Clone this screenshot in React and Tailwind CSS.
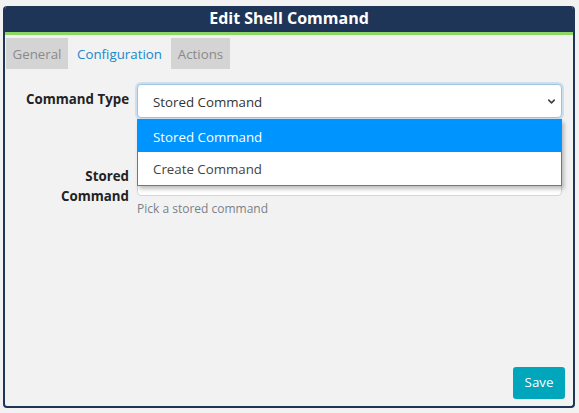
import React from 'react';
import { ChevronDown } from 'lucide-react';

const font = { fontFamily: '"Open Sans", "Liberation Sans", sans-serif' };

const Tab = ({ label, active, width }) => (
  <div
    className={`h-[31px] flex items-center justify-center pt-[2px] text-[13.3px] ${width} ${
      active ? 'text-[#1a87c9]' : 'bg-[#d4d4d4] text-[#8a8a8a]'
    }`}
  >
    {label}
  </div>
);

export default function App() {
  return (
    <div className="min-h-screen w-full bg-[#f2f2f2] pt-[6px] pl-[3px]" style={font}>
      <div className="w-[572px] h-[402px] flex flex-col rounded-[4px] overflow-hidden bg-[#f2f2f2] border-2 border-t-0 border-[#1f3557]">
        {/* header */}
        <div className="h-[29px] -mx-[2px] bg-[#1f3557] border-b-[3px] border-[#8dd764] flex items-center justify-center rounded-t-[4px]">
          <span className="text-white font-bold text-[16px] leading-none -mt-[2px]">Edit Shell Command</span>
        </div>

        {/* tabs */}
        <div className="flex mt-[3px] pl-[1px]">
          <Tab label="General" width="w-[62px]" />
          <Tab label="Configuration" width="w-[103px]" active />
          <Tab label="Actions" width="w-[59px]" />
        </div>

        {/* form */}
        <div className="flex-1 flex flex-col relative">
          <div className="flex items-center mt-[15px]">
            <div className="w-[124px] text-right text-[13.3px] font-bold text-[#222] -mt-[3px]">Command Type</div>
            <div className="ml-[8px] w-[425px] relative">
              <div className="h-[34px] bg-white rounded-[4px] border border-[#9cc3df] shadow-[0_0_0_2px_rgba(180,210,235,0.6)] flex items-center justify-between pl-[15px] pr-[4px] text-[13.3px] text-[#333]">
                <span className="mt-[3px]">Stored Command</span>
                <ChevronDown size={11} strokeWidth={3.5} className="text-[#444]" />
              </div>
              {/* open dropdown */}
              <div className="absolute left-0 top-[35px] w-full z-10 bg-white border border-t-0 border-[#767676] shadow-[2px_3px_4px_rgba(0,0,0,0.25)] text-[13.3px]">
                <div className="h-[33px] flex items-center pl-[15px] pt-[4px] bg-[#0094ff] text-white">Stored Command</div>
                <div className="h-[33px] flex items-center pl-[15px] pt-[3px] text-[#444]">Create Command</div>
              </div>
            </div>
          </div>

          <div className="flex mt-[43px]">
            <div className="w-[124px] flex justify-end pt-[5px]">
              <span className="max-w-[80px] text-right text-[13.3px] font-bold text-[#222] leading-[20px]">
                Stored Command
              </span>
            </div>
            <div className="ml-[8px] w-[425px] flex flex-col">
              <div className="h-[35px] bg-white rounded-[4px] border border-[#cfd6dc]" />
              <div className="text-[12px] text-[#7a8189] mt-[4px]">Pick a stored command</div>
            </div>
          </div>

          <div className="mt-auto flex justify-end pr-[8px] pb-[7px]">
            <button className="w-[52px] h-[32px] rounded-[3px] bg-[#00a6bc] text-white text-[13.3px]">Save</button>
          </div>
        </div>
      </div>
    </div>
  );
}
